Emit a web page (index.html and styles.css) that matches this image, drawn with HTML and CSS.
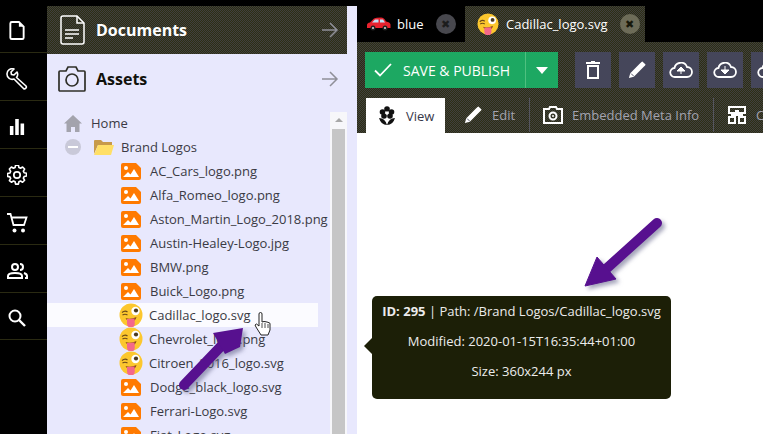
FILE: index.html
```html
<!DOCTYPE html>
<html lang="en">
<head>
<meta charset="utf-8">
<title>Assets</title>
<link rel="stylesheet" href="styles.css">
</head>
<body>
<svg class="defs" width="0" height="0">
  <symbol id="img" viewBox="0 0 20 17">
    <path d="M2 0h13l5 5v10a2 2 0 0 1-2 2H2a2 2 0 0 1-2-2V2a2 2 0 0 1 2-2z" fill="#ff7a00"/>
    <circle cx="5" cy="5" r="2" fill="#fff"/>
    <path d="M2 14l5-5 2.500 2.500L13 6l5 8z" fill="#fff"/>
  </symbol>
  <symbol id="wink" viewBox="0 0 24 24">
    <circle cx="12" cy="12" r="11.500" fill="#fcc72e"/>
    <path d="M3 9.500q3-2.500 5.500-.5M3.500 12q2.500-1.500 5 0" fill="none" stroke="#6b4a1a" stroke-width="1.200"/>
    <circle cx="16.500" cy="8" r="4.200" fill="#fff"/>
    <circle cx="17" cy="7.500" r="2.100" fill="#4a3a20"/>
    <path d="M6.500 15q5 2 11-1-.5 2.500-2 3.500H9q-1.500-.5-2.500-2.500z" fill="#8a4a16"/>
    <path d="M8 16q3.500-.5 7.500-.5l.3 5a3.900 3.900 0 0 1-7.800 0z" fill="#f4688a"/>
  </symbol>
  <symbol id="arrow-r" viewBox="0 0 18 18">
    <path d="M1 9h15M9 2l7 7-7 7" fill="none" stroke="currentColor" stroke-width="1.500"/>
  </symbol>
  <symbol id="pencil" viewBox="0 0 20 20">
    <path d="M1 19l1.500-5.500L13.500 2.500l4 4L6.500 17.500zM15 1l1-.5 3.500 3.500-.5 1-1.500 1.500-4-4z" fill="currentColor"/>
    <path d="M3.500 14l3 3" stroke="#45465a" stroke-width="1"/>
  </symbol>
</svg>

<nav class="rail">
  <a class="rail-item"><svg width="16" height="19" viewBox="0 0 16 20"><path d="M1 2.500A1.500 1.500 0 0 1 2.500 1H10l5 5v11.500a1.500 1.500 0 0 1-1.500 1.500h-11A1.500 1.500 0 0 1 1 17.500z" fill="none" stroke="#fff" stroke-width="2"/><path d="M10 1v5h5" fill="#fff"/></svg></a>
  <a class="rail-item"><svg width="22" height="22" viewBox="0 0 22 22"><path d="M8 1L5 4l.5 2.500L8 7l3-3a5 5 0 0 1-.5 5.500L20 18a1.800 1.800 0 0 1-2.500 2.500L8 11A5.200 5.200 0 0 1 1 6a5.200 5.200 0 0 1 7-5z" fill="none" stroke="#fff" stroke-width="1.600" stroke-linejoin="round"/></svg></a>
  <a class="rail-item"><svg width="16" height="16" viewBox="0 0 16 18"><path d="M0 8h4v10H0zM6 0h4v18H6zM12 5h4v13h-4z" fill="#fff"/></svg></a>
  <a class="rail-item"><svg width="20" height="20" viewBox="0 0 20 20"><path d="M8.500 1h3l.5 2.500 1.700.8 2.200-1.300 2.100 2.100-1.300 2.200.8 1.700 2.500.5v3l-2.500.5-.8 1.700 1.300 2.200-2.100 2.100-2.200-1.300-1.700.8-.5 2.500h-3l-.5-2.500-1.700-.8-2.200 1.300L2 17.200l1.300-2.200-.8-1.700L0 12.800v-3l2.500-.5.800-1.700L2 5.100 4.100 3l2.200 1.300L8 3.500z" transform="translate(.5 -.8) scale(.95)" fill="none" stroke="#fff" stroke-width="1.700" stroke-linejoin="round"/><circle cx="10" cy="10" r="3.200" fill="none" stroke="#fff" stroke-width="1.700"/></svg></a>
  <a class="rail-item"><svg width="21" height="20" viewBox="0 0 21 20"><path d="M0 1h3.500l3 11h10.500l2.500-7.500H5" fill="none" stroke="#fff" stroke-width="1.800"/><circle cx="7.500" cy="17.500" r="2" fill="#fff"/><circle cx="16" cy="17.500" r="2" fill="#fff"/></svg></a>
  <a class="rail-item"><svg width="21" height="16" viewBox="0 0 21 16"><circle cx="8" cy="4" r="3" fill="none" stroke="#fff" stroke-width="2"/><path d="M1 15v-2q0-3 7-3t7 3v2z" fill="none" stroke="#fff" stroke-width="2"/><path d="M13 1a3 3 0 0 1 0 6M17 10q3 1 3 3v2h-2" fill="none" stroke="#fff" stroke-width="2"/></svg></a>
  <a class="rail-item"><svg width="18" height="18" viewBox="0 0 18 18"><circle cx="7" cy="7" r="5.500" fill="none" stroke="#fff" stroke-width="2"/><path d="M11 11l6 6" stroke="#fff" stroke-width="2.400"/></svg></a>
</nav>

<aside class="side">
  <section class="accordion">
    <header class="acc-head acc-dark">
      <svg class="acc-icon" width="25" height="30" viewBox="0 0 25 30"><path d="M1 3a2 2 0 0 1 2-2h14l7 7v19a2 2 0 0 1-2 2H3a2 2 0 0 1-2-2z" fill="none" stroke="#fff" stroke-width="1.500"/><path d="M17 1v7h7" fill="none" stroke="#fff" stroke-width="1.500"/><path d="M5 15h14M5 19h14M5 23h8" stroke="#fff" stroke-width="1.500"/></svg>
      <span class="acc-title">Documents</span>
      <svg class="acc-arrow" width="18" height="18"><use href="#arrow-r"/></svg>
    </header>
    <header class="acc-head">
      <svg class="acc-icon" width="28" height="26" viewBox="0 0 28 26"><path d="M2 5h6l2-4h8l2 4h6a1 1 0 0 1 1 1v18a1 1 0 0 1-1 1H2a1 1 0 0 1-1-1V6a1 1 0 0 1 1-1z" fill="none" stroke="#2f2f28" stroke-width="1.700"/><circle cx="14" cy="14" r="6" fill="none" stroke="#2f2f28" stroke-width="1.700"/></svg>
      <span class="acc-title">Assets</span>
      <svg class="acc-arrow" width="18" height="18"><use href="#arrow-r"/></svg>
    </header>
  </section>
  <div class="tree-wrap">
    <ul class="tree">
      <li class="node node-home"><svg width="18" height="17" viewBox="0 0 18 17"><path d="M9 0l9 8.500h-2.500V17H11v-5H7v5H2.500V8.500H0z" fill="#a3a3ad"/></svg><span>Home</span></li>
      <li class="node node-folder">
        <svg class="minus" width="16" height="16" viewBox="0 0 16 16"><circle cx="8" cy="8" r="8" fill="#c9c9d9"/><path d="M3 8h10" stroke="#fff" stroke-width="2"/></svg>
        <svg width="22" height="17" viewBox="0 0 22 17"><path d="M1 15V2a1 1 0 0 1 1-1h6l2 2h9v3H5z" fill="#c79a4a"/><path d="M1 16L5 6h16l-3 10z" fill="#ffdf66"/></svg>
        <span>Brand Logos</span>
      </li>
      <li class="node file"><svg class="ico-img"><use href="#img"/></svg><span>AC_Cars_logo.png</span></li>
      <li class="node file"><svg class="ico-img"><use href="#img"/></svg><span>Alfa_Romeo_logo.png</span></li>
      <li class="node file"><svg class="ico-img"><use href="#img"/></svg><span>Aston_Martin_Logo_2018.png</span></li>
      <li class="node file"><svg class="ico-img"><use href="#img"/></svg><span>Austin-Healey-Logo.jpg</span></li>
      <li class="node file"><svg class="ico-img"><use href="#img"/></svg><span>BMW.png</span></li>
      <li class="node file"><svg class="ico-img"><use href="#img"/></svg><span>Buick_Logo.png</span></li>
      <li class="node file hover"><svg class="ico-wink"><use href="#wink"/></svg><span>Cadillac_logo.svg</span></li>
      <li class="node file"><svg class="ico-wink"><use href="#wink"/></svg><span>Chevrolet_logo.png</span></li>
      <li class="node file"><svg class="ico-wink"><use href="#wink"/></svg><span>Citroen_2016_logo.svg</span></li>
      <li class="node file"><svg class="ico-img"><use href="#img"/></svg><span>Dodge_black_logo.svg</span></li>
      <li class="node file"><svg class="ico-img"><use href="#img"/></svg><span>Ferrari-Logo.svg</span></li>
      <li class="node file"><svg class="ico-img"><use href="#img"/></svg><span>Fiat_Logo.svg</span></li>
    </ul>
    <div class="scrollbar">
      <div class="scroll-up"></div>
      <div class="scroll-track"></div>
    </div>
  </div>
</aside>

<main class="main">
  <div class="tabs">
    <div class="tab">
      <svg width="24" height="14" viewBox="0 0 24 14"><path d="M0 11V8q0-2 3-2.500L7 1.500Q9 .5 14 .5q3 0 5 4 4 .5 4.500 3v3.500z" fill="#e8222e"/><path d="M8 2.500h3.500v3H5zM13 2.500h3l2 3h-5z" fill="#bfe0f5"/><circle cx="6" cy="11" r="2.500" fill="#222"/><circle cx="18" cy="11" r="2.500" fill="#222"/><circle cx="6" cy="11" r="1" fill="#ddd"/><circle cx="18" cy="11" r="1" fill="#ddd"/></svg>
      <span class="tab-label">blue</span>
      <span class="tab-close">&#10006;</span>
    </div>
    <div class="tab tab-active">
      <svg width="22" height="22"><use href="#wink"/></svg>
      <span class="tab-label">Cadillac_logo.svg</span>
      <span class="tab-close">&#10006;</span>
    </div>
  </div>
  <div class="toolbar">
    <button class="save">
      <svg width="18" height="14" viewBox="0 0 18 14"><path d="M1 7.500l5 5L17 1" fill="none" stroke="#fff" stroke-width="1.800"/></svg>
      <span class="save-label">SAVE &amp; PUBLISH</span>
      <span class="save-more"><i class="caret"></i></span>
    </button>
    <a class="tool"><svg width="14" height="18" viewBox="0 0 14 18"><path d="M0 2h14M5 0h4M2 5h10v12H2z" fill="none" stroke="#fff" stroke-width="2"/></svg></a>
    <a class="tool"><svg width="18" height="18"><use href="#pencil"/></svg></a>
    <a class="tool"><svg width="24" height="16" viewBox="0 0 24 16"><path d="M6 15a4.500 4.500 0 0 1-.5-9A6.500 6.500 0 0 1 18 5a5 5 0 0 1 0 10z" fill="none" stroke="#fff" stroke-width="1.800"/><path d="M12 12V6M8 9l4-4 4 4z" fill="#fff" stroke="#fff"/></svg></a>
    <a class="tool"><svg width="24" height="16" viewBox="0 0 24 16"><path d="M6 15a4.500 4.500 0 0 1-.5-9A6.500 6.500 0 0 1 18 5a5 5 0 0 1 0 10z" fill="none" stroke="#fff" stroke-width="1.800"/><path d="M12 4v6M8 8l4 4 4-4z" fill="#fff" stroke="#fff"/></svg></a>
    <a class="tool"><svg width="24" height="16" viewBox="0 0 24 16"><path d="M6 15a4.500 4.500 0 0 1-.5-9A6.500 6.500 0 0 1 18 5a5 5 0 0 1 0 10z" fill="none" stroke="#fff" stroke-width="1.800"/></svg></a>
  </div>
  <div class="views">
    <div class="view view-active">
      <svg width="16" height="20" viewBox="0 0 16 20"><circle cx="8" cy="3" r="2.800" fill="#111"/><circle cx="3.500" cy="6" r="2.800" fill="#111"/><circle cx="12.500" cy="6" r="2.800" fill="#111"/><circle cx="5" cy="10" r="2.800" fill="#111"/><circle cx="11" cy="10" r="2.800" fill="#111"/><circle cx="8" cy="7" r="1.600" fill="#fff"/><path d="M0 12q6 0 8 7-6 0-8-7zM16 12q-6 0-8 7 6 0 8-7z" fill="#111"/></svg>
      <span>View</span>
    </div>
    <div class="view view-edit"><svg width="18" height="18"><use href="#pencil"/></svg><span>Edit</span></div>
    <div class="view view-meta"><svg width="20" height="18" viewBox="0 0 20 18"><path d="M1 3h5l1-2h6l1 2h5v14H1z" fill="none" stroke="#fff" stroke-width="2"/><circle cx="10" cy="10" r="3.500" fill="none" stroke="#fff" stroke-width="2"/><circle cx="10" cy="10" r="1" fill="#fff"/></svg><span>Embedded Meta Info</span></div>
    <div class="view view-custom"><svg width="18" height="18" viewBox="0 0 18 18"><path d="M1 1h16v6H1zM1 11h6v6H1zM11 11h6v6h-6zM7 5h4M3 9h12" fill="none" stroke="#fff" stroke-width="2"/></svg><span>Custom</span></div>
  </div>
  <div class="stage"></div>
</main>

<div class="tooltip">
  <p><b>ID: 295</b> | Path: /Brand Logos/Cadillac_logo.svg</p>
  <p>Modified: 2020-01-15T16:35:44+01:00</p>
  <p>Size: 360x244 px</p>
</div>

<svg class="annot annot-one" width="70" height="70" viewBox="0 0 70 70"><path d="M6 60L48 16" stroke="#57108f" stroke-width="10" stroke-linecap="round"/><path d="M65 3L62 22 47 29 35 8z" fill="#57108f"/></svg>
<svg class="annot annot-two" width="84" height="76" viewBox="0 0 84 76"><path d="M77 10L26 56" stroke="#57108f" stroke-width="10" stroke-linecap="round"/><path d="M5 73L17 44 36 66z" fill="#57108f" stroke="#57108f" stroke-width="1" stroke-linejoin="round"/></svg>
<svg class="pointer" width="18" height="24" viewBox="0 0 18 24"><path d="M5 2a1.500 1.500 0 0 1 3 0v8l2-.5 2 .3 2 .5 2 1V18l-2 5H7l-5-8-1-2 1.500-1L5 14z" fill="#fff" stroke="#222" stroke-width="1"/><path d="M8 11v5M11 11v5M14 12v4" stroke="#222" stroke-width=".8"/></svg>
</body>
</html>
```
FILE: styles.css
```css
* { box-sizing: border-box; }
html, body { margin: 0; height: 100%; }
body {
  position: relative;
  display: flex;
  width: 763px;
  height: 434px;
  overflow: hidden;
  background: #000;
  font-family: "Open Sans", sans-serif;
  font-size: 13px;
}
.defs { position: absolute; }
ul { list-style: none; margin: 0; padding: 0; }
p { margin: 0; }

/* left rail */
.rail { width: 47px; flex: none; padding-top: 5px; }
.rail-item {
  display: flex;
  align-items: center;
  justify-content: center;
  height: 48px;
  padding: 4px 13px 0 0;
  border-bottom: 1px solid #2a2a12;
}
.rail-item:last-child { height: 47px; }

/* sidebar */
.side {
  width: 310px;
  flex: none;
  margin-top: 6px;
  padding-right: 10px;
  display: flex;
  flex-direction: column;
  background: #e8e8fd;
}
.acc-head {
  position: relative;
  display: flex;
  align-items: center;
  height: 49px;
  padding-left: 11px;
  color: #11110c;
}
.acc-dark {
  height: 48px;
  padding-left: 13px;
  color: #fff;
  background: repeating-conic-gradient(#40403e 0 25%, #2d2e14 0 50%) 0 0 / 2px 2px;
}
.acc-icon { flex: none; }
.acc-head .acc-title { font-size: 16px; font-weight: 700; }
.acc-dark .acc-title { margin-left: 11px; }
.acc-title { margin-left: 10px; flex: 1; }
.acc-arrow { margin-right: 8px; color: #8f8f98; }

.tree-wrap { flex: 1; display: flex; min-height: 0; padding-top: 8px; }
.tree { flex: 1; min-width: 0; padding-top: 0; }
.node {
  display: flex;
  align-items: center;
  height: 24px;
  color: #3a3a44;
  white-space: nowrap;
}
.node-home { padding-left: 17px; }
.node-home span { margin-left: 9px; }
.node-folder { padding-left: 18px; }
.node-folder svg + svg { margin-left: 12px; }
.node-folder span { margin-left: 6px; }
.file { padding-left: 74px; margin-right: 12px; }
.ico-img { width: 20px; height: 17px; flex: none; margin-left: 0; }
.ico-wink { width: 24px; height: 24px; flex: none; margin-left: -2px; margin-right: -1px; }
.hover { background: #fbfbff; }
.file span { margin-left: 9px; }
.file .ico-wink + span { margin-left: 7px; }

.scrollbar {
  width: 17px;
  flex: none;
  margin-top: 1px;
  background: #f7f7fa;
  display: flex;
  flex-direction: column;
  align-items: center;
  padding-top: 6px;
}
.scroll-up {
  width: 0;
  height: 0;
  border: 4px solid transparent;
  border-top: 0;
  border-bottom: 4px solid #a8a8a8;
  margin-bottom: 7px;
}
.scroll-track { width: 13px; flex: 1; background: #c6c6c6; }

/* main */
.main { flex: 1; min-width: 0; display: flex; flex-direction: column; background: #000; }
.tabs { display: flex; height: 42px; padding-left: 8px; padding-top: 6px; flex: none; }
.tab {
  display: flex;
  align-items: center;
  height: 36px;
  width: 100px;
  padding-left: 2px;
  color: #fff;
  white-space: nowrap;
}
.tab-active {
  width: 180px;
  padding-left: 12px;
  background: repeating-conic-gradient(#40403e 0 25%, #2d2e14 0 50%) 0 0 / 2px 2px;
}
.tab-label { margin-left: 6px; font-size: 13px; }
.tab-active .tab-label { margin-left: 7px; }
.tab-close {
  width: 20px;
  height: 20px;
  margin-left: 12px;
  border-radius: 50%;
  background: #48484e;
  color: #1d1d1d;
  font-size: 11px;
  line-height: 20px;
  text-align: center;
}
.tab-active .tab-close { margin-left: 12px; background: #6d6c58; color: #18180a; }

.toolbar {
  display: flex;
  align-items: center;
  gap: 8px;
  height: 56px;
  flex: none;
  padding: 10px 0 10px 8px;
  background: repeating-conic-gradient(#40403e 0 25%, #2d2e14 0 50%) 0 0 / 2px 2px;
  overflow: hidden;
}
.save {
  display: flex;
  align-items: center;
  width: 193px;
  height: 36px;
  flex: none;
  margin-right: 9px;
  padding: 0 0 0 9px;
  border: 0;
  background: #1da862;
  color: #fff;
  font: 14px "Open Sans", sans-serif;
}
.save-label { margin-left: 11px; white-space: nowrap; }
.save-more {
  display: flex;
  align-items: center;
  justify-content: center;
  width: 33px;
  height: 36px;
  margin-left: auto;
  border-left: 1px solid #4fc07f;
}
.caret {
  width: 0;
  height: 0;
  border: 6px solid transparent;
  border-top: 7px solid #fff;
  border-bottom: 0;
}
.tool {
  display: flex;
  align-items: center;
  justify-content: center;
  width: 36px;
  height: 36px;
  flex: none;
  background: #45465a;
  color: #fff;
}
.views {
  display: flex;
  height: 35px;
  flex: none;
  background: repeating-conic-gradient(#40403e 0 25%, #2d2e14 0 50%) 0 0 / 2px 2px;
  white-space: nowrap;
  overflow: hidden;
  color: #9a9aa8;
}
.view {
  display: flex;
  align-items: center;
  height: 34px;
  padding: 0 15px 0 14px;
  flex: none;
  color: #a3a3b0;
}
.view svg { margin-right: 10px; color: #fff; flex: none; }
.view-active {
  width: 79px;
  margin-left: 9px;
  padding: 0 0 0 13px;
  background: #fff;
  color: #37374a;
  height: 35px;
}
.view-active svg { margin-right: 11px; }
.view-edit { width: 85px; padding-left: 19px; border-right: 1px solid #55555f; }
.view-edit svg { margin-right: 10px; }
.view-meta { width: 184px; padding-left: 13px; border-right: 1px solid #55555f; }
.view-meta svg { margin-right: 9px; }
.view-custom svg { margin-right: 10px; }
.stage { flex: 1; background: #fff; }

/* overlays */
.tooltip {
  position: absolute;
  left: 372px;
  top: 296px;
  width: 299px;
  height: 103px;
  padding-top: 0;
  background: #1c1f07;
  border-radius: 5px;
  color: #ececec;
  text-align: center;
  font-size: 13px;
  line-height: 30px;
}
.tooltip::before {
  content: "";
  position: absolute;
  left: -8px;
  top: 42px;
  border: 8px solid transparent;
  border-left: 0;
  border-right: 8px solid #1c1f07;
}
.annot { position: absolute; filter: drop-shadow(3px 3px 2px rgba(90, 90, 130, .55)); }
.annot-one { left: 178px; top: 325px; }
.annot-two { left: 580px; top: 213px; }
.pointer { position: absolute; left: 254px; top: 312px; }
```
